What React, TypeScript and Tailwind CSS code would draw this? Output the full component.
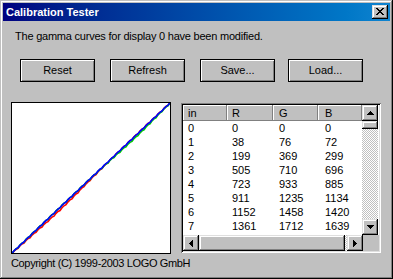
import React from "react";

const FONT = "font-['Liberation_Sans',Arial,sans-serif]";

const ROWS = [
  ["0", "0", "0", "0"],
  ["1", "38", "76", "72"],
  ["2", "199", "369", "299"],
  ["3", "505", "710", "696"],
  ["4", "723", "933", "885"],
  ["5", "911", "1235", "1134"],
  ["6", "1152", "1458", "1420"],
  ["7", "1361", "1712", "1639"],
];

const COLS = [
  { label: "in", w: "w-[44px]", pl: "pl-[5px]" },
  { label: "R", w: "w-[46px]", pl: "pl-[5px]" },
  { label: "G", w: "w-[45px]", pl: "pl-[6px]" },
  { label: "B", w: "w-[44px]", pl: "pl-[7px]" },
];

const raised =
  "shadow-[inset_-1px_-1px_#000,inset_1px_1px_#dfdfdf,inset_-2px_-2px_#808080,inset_2px_2px_#fff]";
const track =
  "bg-[image:repeating-conic-gradient(#c0c0c0_0_25%,#fff_0_50%)] bg-[length:2px_2px]";

function CloseGlyph() {
  const rows = ["XX....XX", ".XX..XX.", "..XXXX..", "...XX...", "..XXXX..", ".XX..XX.", "XX....XX"];
  return (
    <svg width="8" height="7" shapeRendering="crispEdges">
      {rows.map((r, y) =>
        r.split("").map((c, x) => (c === "X" ? <rect key={`${x}-${y}`} x={x} y={y} width="1" height="1" fill="#000" /> : null))
      )}
    </svg>
  );
}

function Arrow({ dir }: { dir: "up" | "down" | "left" | "right" }) {
  // 7x4 triangle, rotated per direction
  const pts =
    dir === "up"
      ? "3.5,0 7,4 0,4"
      : dir === "down"
      ? "0,0 7,0 3.5,4"
      : dir === "left"
      ? "0,3.5 4,0 4,7"
      : "0,0 4,3.5 0,7";
  const vert = dir === "up" || dir === "down";
  return (
    <svg width={vert ? 7 : 4} height={vert ? 4 : 7} shapeRendering="crispEdges">
      <polygon points={pts} fill="#000" />
    </svg>
  );
}

function ScrollButton({ dir }: { dir: "up" | "down" | "left" | "right" }) {
  return (
    <div className={`flex h-[16px] w-[16px] shrink-0 items-center justify-center bg-[#c0c0c0] ${raised}`}>
      <Arrow dir={dir} />
    </div>
  );
}

function Curve({ color, bump, at, width }: { color: string; bump: number; at: number; width: number }) {
  const W = 158;
  const H = 150;
  const pts: string[] = [];
  for (let x = 0; x <= W; x += 2) {
    const t = x / W;
    const off = bump * Math.exp(-((t - at) * (t - at)) / (2 * width * width));
    const jag = (x % 6 === 0 ? 0.5 : -0.4) * (bump > 0 ? 1 : 0.6);
    const y = H - t * H + off + jag;
    pts.push(`${x},${y.toFixed(2)}`);
  }
  return <polyline points={pts.join(" ")} fill="none" stroke={color} strokeWidth="1.6" />;
}

export default function App() {
  const buttons = [
    { label: "Reset", cls: "" },
    { label: "Refresh", cls: "ml-[15px]" },
    { label: "Save...", cls: "ml-[15px]" },
    { label: "Load...", cls: "ml-[13px]" },
  ];

  return (
    <div
      className={`${FONT} flex h-[279px] w-[393px] flex-col bg-[#c0c0c0] p-[3px] text-[11px] text-black shadow-[inset_-1px_-1px_#000,inset_1px_1px_#c0c0c0,inset_-2px_-2px_#808080,inset_2px_2px_#fff]`}
    >
      {/* title bar */}
      <div className="flex h-[18px] shrink-0 items-center justify-between bg-gradient-to-r from-[#000080] to-[#1084d0] pl-[3px] pr-[2px]">
        <span className="text-[11px] font-bold leading-none text-white">Calibration Tester</span>
        <div className={`flex h-[14px] w-[16px] items-center justify-center bg-[#c0c0c0] pb-px pr-px ${raised}`}>
          <CloseGlyph />
        </div>
      </div>

      <div className="mt-[9px] pl-[12px] leading-[13px] tracking-[-0.22px]">
        The gamma curves for display 0 have been modified.
      </div>

      <div className="ml-[17px] mt-[16px] flex">
        {buttons.map((b) => (
          <div
            key={b.label}
            className={`flex h-[23px] w-[75px] items-center justify-center border border-black bg-[#c0c0c0] leading-none shadow-[inset_1px_1px_#fff,inset_-1px_-1px_#808080] ${b.cls}`}
          >
            {b.label}
          </div>
        ))}
      </div>

      <div className="ml-[8px] mt-[20px] flex items-start">
        {/* plot */}
        <div className="h-[152px] w-[160px] border border-black bg-white">
          <svg width="158" height="150" viewBox="0 0 158 150">
            <Curve color="#ff0000" bump={2.6} at={0.3} width={0.16} />
            <Curve color="#00d000" bump={1.8} at={0.78} width={0.12} />
            <Curve color="#0000ff" bump={0} at={0.5} width={0.2} />
          </svg>
        </div>

        {/* list */}
        <div className="ml-[10px] mt-px flex h-[150px] w-[200px] flex-col bg-white p-[2px] shadow-[inset_1px_1px_#808080,inset_-1px_-1px_#fff,inset_2px_2px_#000,inset_-2px_-2px_#dfdfdf]">
          <div className="flex h-[130px]">
            <div className="flex w-[179px] flex-col overflow-hidden">
              <div className="flex h-[16px] shrink-0">
                {COLS.map((c) => (
                  <div
                    key={c.label}
                    className={`${c.w} ${c.pl} flex items-center bg-[#c0c0c0] leading-none shadow-[inset_-1px_-1px_#808080,inset_1px_1px_#fff]`}
                  >
                    {c.label}
                  </div>
                ))}
              </div>
              {ROWS.map((r) => (
                <div key={r[0]} className="flex h-[14px] items-center leading-none">
                  {r.map((v, i) => (
                    <div key={i} className={`${COLS[i].w} ${COLS[i].pl}`}>
                      {v}
                    </div>
                  ))}
                </div>
              ))}
            </div>
            <div className="flex w-[16px] flex-col">
              <ScrollButton dir="up" />
              <div className={`h-[8px] w-[16px] bg-[#c0c0c0] ${raised}`} />
              <div className={`flex-1 ${track}`} />
              <ScrollButton dir="down" />
            </div>
          </div>
          <div className="flex h-[16px]">
            <ScrollButton dir="left" />
            <div className={`w-[146px] bg-[#c0c0c0] ${raised}`} />
            <div className={`flex-1 ${track}`} />
            <ScrollButton dir="right" />
            <div className="w-[16px] bg-[#c0c0c0]" />
          </div>
        </div>
      </div>

      <div className="ml-[8px] mt-[3px] leading-[13px] tracking-[-0.35px]">Copyright (C) 1999-2003 LOGO GmbH</div>
    </div>
  );
}
